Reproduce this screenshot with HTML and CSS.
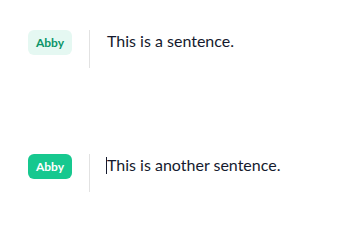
FILE: index.html
```html
<!DOCTYPE html>
<html lang="en">
<head>
    <meta charset="UTF-8">
    <title>Speaker blocks</title>
    <link rel="stylesheet" href="styles.css">
</head>
<body>
    <main class="transcript">
        <div class="block">
            <span class="speaker">Abby</span>
            <div class="divider"></div>
            <p class="sentence">This is a sentence.</p>
        </div>
        <div class="block active">
            <span class="speaker">Abby</span>
            <div class="divider"></div>
            <p class="sentence"><span class="caret"></span>This is another sentence.</p>
        </div>
    </main>
</body>
</html>
```

FILE: styles.css
```css
body {
    margin: 0;
    padding: 0;
    background: #ffffff;
    font-family: "Lato", "Inter", sans-serif;
    color: #151a2e;
}
.transcript {
    padding: 30px 0 0 28px;
}
.block {
    display: flex;
    align-items: flex-start;
    height: 38px;
    margin-bottom: 86px;
}
.block:last-child {
    margin-bottom: 0;
}
.speaker {
    display: flex;
    align-items: center;
    justify-content: center;
    width: 44px;
    height: 25px;
    border-radius: 6px;
    background: #e5f8f2;
    color: #0b9468;
    font-size: 12px;
    font-weight: 700;
}
.active .speaker {
    background: #17c88f;
    color: #ffffff;
}
.divider {
    width: 1px;
    height: 38px;
    margin: 0 17px;
    background: #e2e2e2;
}
.sentence {
    position: relative;
    margin: 0;
    font-size: 16px;
    line-height: 20px;
    padding-top: 1px;
}
.caret {
    position: absolute;
    left: -1px;
    top: 3px;
    width: 1px;
    height: 17px;
    background: #151a2e;
}
```
